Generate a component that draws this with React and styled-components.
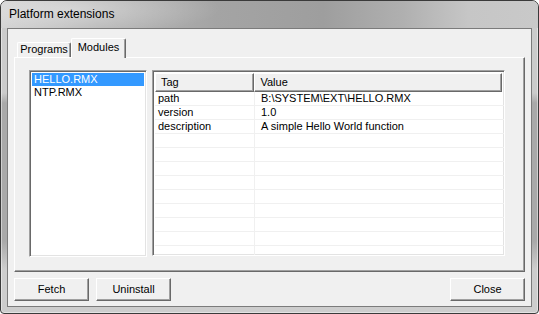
import React from 'react';
import styled, { createGlobalStyle } from 'styled-components';

const Global = createGlobalStyle`
  html, body { margin: 0; padding: 0; background: #ffffff; }
  body {
    width: 539px;
    height: 314px;
    overflow: hidden;
    font-family: "Liberation Sans", Arial, sans-serif;
    font-size: 11px;
    color: #000;
  }
  * { box-sizing: border-box; }
`;

const Window = styled.div`
  width: 539px;
  height: 314px;
  display: flex;
  flex-direction: column;
  border: 1px solid #3a3a3a;
  border-radius: 7px 7px 4px 4px;
  padding: 0 6px 6px;
  overflow: hidden;
  background: linear-gradient(
    180deg,
    #cbcbcb 0px,
    #cbcbcb 92px,
    #a9a9a9 102px,
    #a9a9a9 240px,
    #cdcdcd 268px
  );
  box-shadow: inset 0 0 0 1px rgba(255, 255, 255, 0.45);
`;

const TitleBar = styled.div`
  height: 27px;
  margin: 0 -6px;
  padding: 0 0 1px 8px;
  display: flex;
  align-items: center;
  font-family: "Liberation Sans", Arial, sans-serif;
  font-size: 12px;
  color: #000;
  background:
    radial-gradient(ellipse 150px 26px at 70px 8px, rgba(255, 255, 255, 0.35), rgba(255, 255, 255, 0)),
    linear-gradient(90deg, #d2d2d2 0%, #b8b8b8 18%, #a4a4a4 40%, #9e9e9e 60%, #b0b0b0 75%, #c6c6c6 87%, #c9c9c9 100%);
`;

const Client = styled.div`
  flex: 1;
  display: flex;
  flex-direction: column;
  border: 1px solid #7b7b7b;
  background: #f0f0f0;
  padding: 9px 6px 0 6px;
`;

const TabStrip = styled.div`
  height: 19px;
  display: flex;
  align-items: flex-end;
  padding-left: 3px;
`;

const Tab = styled.div`
  position: relative;
  z-index: ${(p) => (p.$active ? 1 : 0)};
  width: ${(p) => (p.$active ? 55 : 54)}px;
  height: ${(p) => (p.$active ? 20 : 15)}px;
  margin-bottom: ${(p) => (p.$active ? -1 : 0)}px;
  padding-top: ${(p) => (p.$active ? 2 : 0)}px;
  background: #f0f0f0;
  border-top: 1px solid #ffffff;
  border-left: 1px solid #ffffff;
  border-right: 1px solid #696969;
  border-radius: 2px 2px 0 0;
  box-shadow: inset -1px 0 0 #a0a0a0;
  text-align: center;
  line-height: 13px;
  font-size: 11px;
  white-space: nowrap;
`;

const Panel = styled.div`
  width: 511px;
  height: 215px;
  display: flex;
  align-items: flex-start;
  gap: 5px;
  padding: 12px 0 0 14px;
  border-top: 1px solid #ffffff;
  border-left: 1px solid #ffffff;
  border-right: 1px solid #696969;
  border-bottom: 1px solid #696969;
  box-shadow: inset -1px -1px 0 #a0a0a0;
`;

const Sunken = styled.div`
  background: #ffffff;
  border-top: 1px solid #a0a0a0;
  border-left: 1px solid #a0a0a0;
  border-right: 1px solid #ffffff;
  border-bottom: 1px solid #ffffff;
  box-shadow: inset 1px 1px 0 #696969, inset -1px -1px 0 #e3e3e3;
  padding: 2px;
  overflow: hidden;
`;

const ListBox = styled(Sunken)`
  width: 118px;
  height: 187px;
`;

const ListItem = styled.div`
  height: 13px;
  line-height: 13px;
  padding-left: 2px;
  white-space: nowrap;
  background: ${(p) => (p.$selected ? '#3399ff' : 'transparent')};
  color: ${(p) => (p.$selected ? '#ffffff' : '#000000')};
`;

const ListView = styled(Sunken)`
  width: 353px;
  height: 186px;
`;

const Header = styled.div`
  display: flex;
  height: 19px;
`;

const HeaderCell = styled.div`
  width: ${(p) => p.$w}px;
  height: 19px;
  padding-left: 5px;
  line-height: 16px;
  background: #f0f0f0;
  border-top: 1px solid #ffffff;
  border-left: 1px solid #ffffff;
  border-right: 1px solid #696969;
  border-bottom: 1px solid #696969;
  box-shadow: inset -1px -1px 0 #a0a0a0;
  white-space: nowrap;
`;

const Row = styled.div`
  display: grid;
  grid-template-columns: 100px 249px;
`;

const Cell = styled.div`
  height: 14px;
  line-height: 13px;
  padding-left: ${(p) => (p.$first ? 3 : 6)}px;
  border-bottom: 1px solid #f0f0f0;
  border-right: ${(p) => (p.$first ? '1px solid #f0f0f0' : 'none')};
  white-space: nowrap;
  overflow: hidden;
`;

const ButtonRow = styled.div`
  display: flex;
  gap: 7px;
  margin-top: 6px;
`;

const Button = styled.button`
  width: 75px;
  height: 23px;
  margin-left: ${(p) => (p.$right ? 'auto' : '0')};
  padding: 0 0 1px;
  background: #f0f0f0;
  border: none;
  border-top: 1px solid #ffffff;
  border-left: 1px solid #ffffff;
  border-right: 1px solid #696969;
  border-bottom: 1px solid #696969;
  box-shadow: inset -1px -1px 0 #a0a0a0;
  font-family: "Liberation Sans", Arial, sans-serif;
  font-size: 11px;
  color: #000;
  cursor: default;
`;

const modules = ['HELLO.RMX', 'NTP.RMX'];
const props = [
  ['path', 'B:\\SYSTEM\\EXT\\HELLO.RMX'],
  ['version', '1.0'],
  ['description', 'A simple Hello World function'],
];

export default function App() {
  const rows = [...props];
  while (rows.length < 12) rows.push(['', '']);
  return (
    <>
      <Global />
      <Window>
        <TitleBar>Platform extensions</TitleBar>
        <Client>
          <TabStrip>
            <Tab>Programs</Tab>
            <Tab $active>Modules</Tab>
          </TabStrip>
          <Panel>
            <ListBox>
              {modules.map((m, i) => (
                <ListItem key={m} $selected={i === 0}>
                  {m}
                </ListItem>
              ))}
            </ListBox>
            <ListView>
              <Header>
                <HeaderCell $w={100}>Tag</HeaderCell>
                <HeaderCell $w={249}>Value</HeaderCell>
              </Header>
              {rows.map((r, i) => (
                <Row key={i}>
                  <Cell $first>{r[0]}</Cell>
                  <Cell>{r[1]}</Cell>
                </Row>
              ))}
            </ListView>
          </Panel>
          <ButtonRow>
            <Button>Fetch</Button>
            <Button>Uninstall</Button>
            <Button $right>Close</Button>
          </ButtonRow>
        </Client>
      </Window>
    </>
  );
}
